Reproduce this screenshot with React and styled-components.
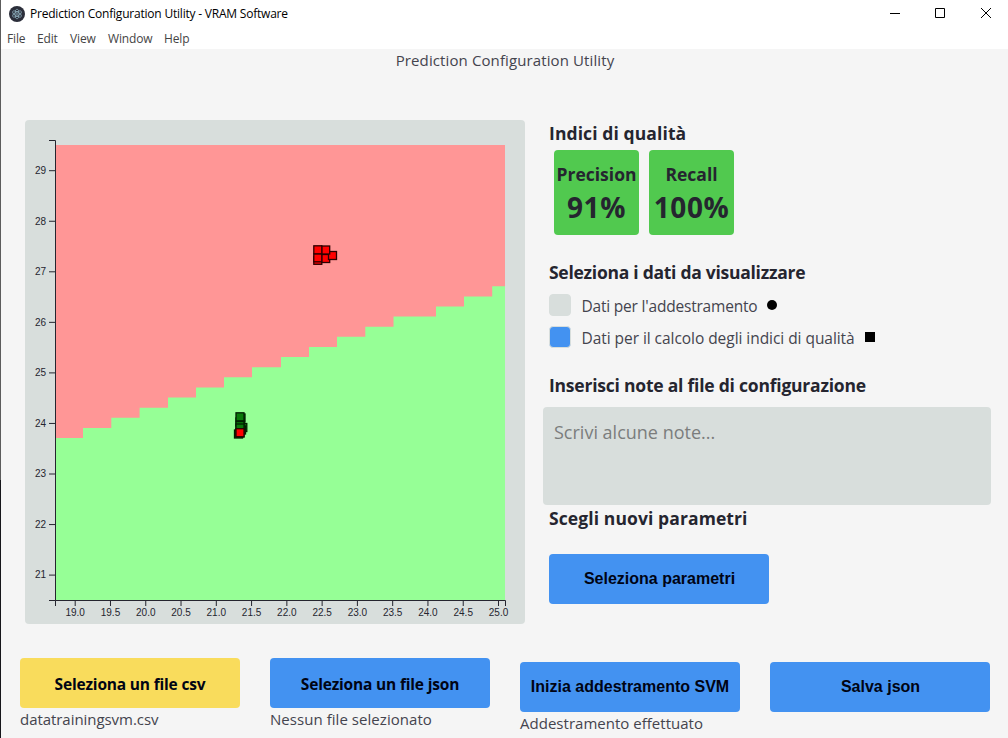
import React from "react";
import styled, { createGlobalStyle } from "styled-components";

const Global = createGlobalStyle`
  *, *::before, *::after { box-sizing: border-box; }
  body {
    margin: 0;
    background: #f5f5f5;
    color: #25252f;
    font-family: "Open Sans", "Noto Sans", sans-serif;
    overflow: hidden;
  }
  h1, h2, p { margin: 0; }
`;

const Window = styled.div`
  width: 1008px;
  height: 738px;
  display: flex;
  flex-direction: column;
  background: linear-gradient(#5c5c5c 0 480px, #16161a 480px) left / 1px 100% no-repeat, #f5f5f5;
  padding-left: 1px;
  overflow: hidden;
`;

const TitleBar = styled.header`
  height: 28px;
  flex: none;
  display: flex;
  align-items: center;
  background: #fff;
  padding-left: 8px;
`;

const Text = styled.span`
  font-size: ${(p) => p.$size || 15}px;
  font-weight: ${(p) => p.$weight || 400};
  letter-spacing: ${(p) => p.$track || 0}px;
  line-height: ${(p) => p.$line || 20}px;
  color: ${(p) => p.$color || "inherit"};
  white-space: nowrap;
`;

const AppName = styled(Text)`
  margin-left: 5px;
  flex: 1;
`;

const Controls = styled.div`
  display: flex;
  width: 138px;
  height: 28px;
  svg { width: 46px; height: 28px; }
`;

const MenuBar = styled.nav`
  height: 21px;
  flex: none;
  display: flex;
  background: #fff;
  padding-left: 6px;
`;

const MenuItem = styled(Text)`
  width: ${(p) => p.$width}px;
`;

const PageTitle = styled.h1`
  height: 71px;
  flex: none;
  padding-left: 1px;
  text-align: center;
  font-weight: 400;
  line-height: 0;
`;

const Main = styled.main`
  height: 504px;
  flex: none;
  display: flex;
  padding-left: 24px;
  gap: 18px;
`;

const ChartCard = styled.section`
  width: 500px;
  height: 504px;
  flex: none;
  border-radius: 4px;
  background: #d8dedc;
  svg { display: block; }
`;

const Panel = styled.div`
  width: 448px;
  display: flex;
  flex-direction: column;
`;

const SectionTitle = styled.h2`
  height: ${(p) => p.$height}px;
  padding-left: 6px;
  flex: none;
  line-height: 0;
`;

const Scores = styled.div`
  display: flex;
  gap: 10px;
  padding-left: 11px;
  margin-bottom: 25px;
`;

const Score = styled.div`
  width: 85px;
  height: 85px;
  border-radius: 4px;
  background: #51c94f;
  display: flex;
  flex-direction: column;
  align-items: center;
  padding-top: 14px;
`;

const Option = styled.label`
  height: 32px;
  display: flex;
  align-items: center;
  padding-left: 6px;
`;

const OptionName = styled(Text)`
  padding-top: 2px;
`;

const Check = styled.span`
  width: 22px;
  height: 22px;
  margin-right: 10.5px;
  border-radius: 4px;
  border: 1px solid #d8dedc;
  background: ${(p) => (p.$on ? "#4392f1" : "#d8dedc")};
`;

const Marker = styled.span`
  width: 10px;
  height: 10px;
  margin-left: ${(p) => p.$gap}px;
  margin-bottom: 1px;
  background: #000;
  border-radius: ${(p) => (p.$round ? "50%" : "0")};
`;

const Notes = styled.textarea`
  display: block;
  width: 448px;
  height: 98px;
  flex: none;
  border: 0;
  border-radius: 4px;
  background: #d8dedc;
  resize: none;
  padding: 13px 11px;
  font: 18px/25px "Open Sans", sans-serif;
  letter-spacing: 0;
  &::placeholder { color: #7b7d7d; opacity: 1; }
`;

const Button = styled.button`
  display: flex;
  align-items: center;
  justify-content: center;
  width: 220px;
  height: 50px;
  flex: none;
  padding: ${(p) => p.$pad || "0"};
  border: 0;
  border-radius: 4px;
  background: ${(p) => p.$bg || "#4392f1"};
  color: #000414;
  font-family: ${(p) => (p.$arial ? '"Liberation Sans", Arial, sans-serif' : "inherit")};
`;

const ButtonSlot = styled.div`
  padding-left: 6px;
`;

const Footer = styled.footer`
  display: flex;
  gap: 30px;
  padding: 34px 0 0 19px;
`;

const Action = styled.div`
  display: flex;
  flex-direction: column;
  padding-top: ${(p) => p.$drop || 0}px;
`;

const STEPS = [
  [83, 438], [111.3, 428], [139.6, 417.8], [168, 407.7], [196, 397.5], [224, 387.4],
  [252, 377.3], [281, 367.2], [309, 357], [337, 346.9], [365.3, 336.8], [393.5, 326.7],
  [436, 316.6], [464, 306.5], [492.2, 296.4], [505, 286.3],
];
const SPLIT = STEPS.map(([x, y]) => `V${y} H${x}`).join(" ");

const X_TICKS = Array.from({ length: 13 }, (_, i) => 19 + i * 0.5);
const Y_TICKS = Array.from({ length: 9 }, (_, i) => 21 + i);

const POINTS = [
  [313.8, 256.3, "#f00"], [321.7, 254.5, "#f00"], [328.5, 251.5, "#f00"],
  [313.8, 253.8, "#f00"], [321.7, 246, "#f00"], [313.8, 245.8, "#f00"],
  [237, 414, "#0a780a"], [236, 418, "#0a780a"], [238.8, 423.5, "#0a780a"],
  [237.5, 426, "#0a780a"], [236, 421.5, "#0a780a"], [236, 424, "#0a780a"],
  [234.5, 430, "#0a780a"], [236, 429, "#0a780a"], [236, 412.8, "#0a780a"],
  [236, 428.7, "#f00"],
];

function Chart() {
  return (
    <svg width="500" height="504" viewBox="25 120 500 504">
      <path d="M56 145H505V600H56Z" fill="#96ff96" />
      <path d={`M56 145 ${SPLIT} V145 Z`} fill="#ff9696" />
      <g stroke="#25252f" fill="none" strokeWidth="1">
        <path d="M49 140.5H55.5V600.5H49" />
        <path d="M55.5 606V600.5H505.5V606" />
        {Y_TICKS.map((v) => {
          const y = 575.1 - (v - 21) * 50.55;
          return <path key={v} d={`M49 ${y}H55`} />;
        })}
        {X_TICKS.map((v) => {
          const x = 75.2 + (v - 19) * 70.55;
          return <path key={v} d={`M${x} 601V606`} />;
        })}
      </g>
      <g fill="#25252f" fontFamily='"Liberation Sans", Arial, sans-serif' fontSize="10">
        {Y_TICKS.map((v) => (
          <text key={v} x="46" y={578.4 - (v - 21) * 50.55} textAnchor="end">{v}</text>
        ))}
        {X_TICKS.map((v) => (
          <text key={v} x={75.2 + (v - 19) * 70.55} y="616" textAnchor="middle">{v.toFixed(1)}</text>
        ))}
      </g>
      <g strokeWidth="1.3">
        {POINTS.map(([x, y, fill], i) => (
          <rect key={i} x={x} y={y} width="8" height="8" fill={fill} stroke={fill === "#f00" ? "#2a0000" : "#001e00"} />
        ))}
      </g>
    </svg>
  );
}

function ElectronLogo() {
  return (
    <svg width="16" height="16" viewBox="0 0 16 16">
      <circle cx="8" cy="8" r="8" fill="#2b2e3a" />
      <g fill="none" stroke="#9fc5d3" strokeWidth="0.6">
        <ellipse cx="8" cy="8" rx="5" ry="2" transform="rotate(28 8 8)" />
        <ellipse cx="8" cy="8" rx="5" ry="2" transform="rotate(90 8 8)" />
        <ellipse cx="8" cy="8" rx="5" ry="2" transform="rotate(152 8 8)" />
      </g>
      <circle cx="8" cy="8" r="0.8" fill="#9fc5d3" />
    </svg>
  );
}

const MENU = [["File", 30], ["Edit", 33], ["View", 38], ["Window", 56], ["Help", 40]];

export default function App() {
  return (
    <>
      <Global />
      <Window>
        <TitleBar>
          <ElectronLogo />
          <AppName $size={12} $track={-0.21} $color="#000">Prediction Configuration Utility - VRAM Software</AppName>
          <Controls>
            <svg stroke="#000" fill="none"><path d="M20 13.5H30" /></svg>
            <svg stroke="#000" fill="none"><path d="M19.5 8.5H28.5V17.5H19.5Z" /></svg>
            <svg stroke="#000" fill="none"><path d="M19 8L29 18M29 8L19 18" /></svg>
          </Controls>
        </TitleBar>
        <MenuBar>
          {MENU.map(([name, width]) => (
            <MenuItem key={name} $size={12} $width={width} $track={-0.15} $line={21} $color="#444">{name}</MenuItem>
          ))}
        </MenuBar>
        <PageTitle>
          <Text $size={15} $track={0.11} $line={23} $color="#44444e">Prediction Configuration Utility</Text>
        </PageTitle>
        <Main>
          <ChartCard><Chart /></ChartCard>
          <Panel>
            <SectionTitle $height={30}>
              <Text $size={17.5} $weight={700} $track={0.1} $line={27}>Indici di qualità</Text>
            </SectionTitle>
            <Scores>
              <Score>
                <Text $size={17.5} $weight={700} $track={0} $line={20}>Precision</Text>
                <Text $size={28} $weight={700} $track={0.6} $line={47}>91%</Text>
              </Score>
              <Score>
                <Text $size={17.5} $weight={700} $track={0} $line={20}>Recall</Text>
                <Text $size={28} $weight={700} $track={0.6} $line={47}>100%</Text>
              </Score>
            </Scores>
            <SectionTitle $height={29}>
              <Text $size={17.5} $weight={700} $track={-0.27} $line={24}>Seleziona i dati da visualizzare</Text>
            </SectionTitle>
            <Option>
              <Check />
              <OptionName $size={15.5} $track={-0.2} $color="#44444e">Dati per l'addestramento</OptionName>
              <Marker $round $gap={9.5} />
            </Option>
            <Option>
              <Check $on />
              <OptionName $size={15.5} $track={-0.05} $color="#44444e">Dati per il calcolo degli indici di qualità</OptionName>
              <Marker $gap={10.5} />
            </Option>
            <SectionTitle $height={54}>
              <Text $size={17.5} $weight={700} $track={-0.22} $line={64}>Inserisci note al file di configurazione</Text>
            </SectionTitle>
            <Notes placeholder="Scrivi alcune note..." />
            <SectionTitle $height={49}>
              <Text $size={17.5} $weight={700} $track={0.1} $line={27}>Scegli nuovi parametri</Text>
            </SectionTitle>
            <ButtonSlot>
              <Button $arial $pad="0 0 0 1px">
                <Text $size={16} $weight={700}>Seleziona parametri</Text>
              </Button>
            </ButtonSlot>
          </Panel>
        </Main>
        <Footer>
          <Action>
            <Button $bg="#f9dc5c" $pad="2px 0 0"><Text $size={15.5} $weight={700} $track={-0.18}>Seleziona un file csv</Text></Button>
            <Text $size={15} $track={-0.05} $line={23} $color="#44444e">datatrainingsvm.csv</Text>
          </Action>
          <Action>
            <Button $pad="2px 0 0"><Text $size={15.5} $weight={700} $track={-0.18}>Seleziona un file json</Text></Button>
            <Text $size={15} $track={0.05} $line={23} $color="#44444e">Nessun file selezionato</Text>
          </Action>
          <Action $drop={4}>
            <Button $arial><Text $size={16} $weight={700}>Inizia addestramento SVM</Text></Button>
            <Text $size={15} $track={0.02} $line={23} $color="#44444e">Addestramento effettuato</Text>
          </Action>
          <Action $drop={4}>
            <Button $arial $pad="0 0 0 1px"><Text $size={16} $weight={700}>Salva json</Text></Button>
          </Action>
        </Footer>
      </Window>
    </>
  );
}
